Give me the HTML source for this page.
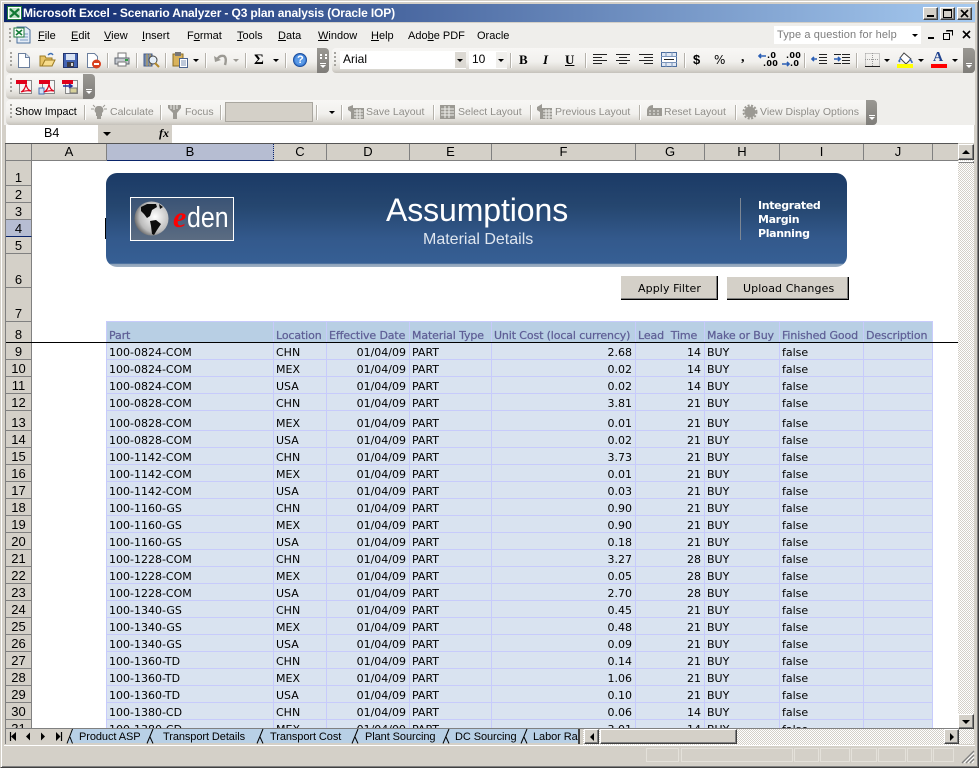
<!DOCTYPE html>
<html><head><meta charset="utf-8"><style>
*{box-sizing:border-box}
html,body{margin:0;padding:0;background:#d4d0c8}
#w{position:relative;width:979px;height:768px;overflow:hidden;background:#d4d0c8;font:11px "Liberation Sans",sans-serif;color:#000}
.a{position:absolute}
.t{position:absolute;white-space:nowrap;line-height:14px}
.g{color:#8f8d88}
.f{font-size:10.5px}
.tb{position:absolute;border-radius:4px;background:linear-gradient(#f8f7f5 0,#f1f0ed 55%,#dcd9d3 85%,#c4c1ba 100%)}
.gr{position:absolute;background:linear-gradient(#9a9893,#7f7d79);border-radius:0 4px 4px 0}
.s{position:absolute;height:15px;background:#b5b2ab;border-right:1px solid #fff;width:2px}
.dots{position:absolute;width:2px;background:repeating-linear-gradient(#a5a39e 0 2px,transparent 2px 4px)}
.ar{position:absolute;width:0;height:0;border-left:3px solid transparent;border-right:3px solid transparent;border-top:3px solid #000}
.ar.d{border-top-color:#9b9993}
svg{position:absolute;overflow:visible}
u{text-decoration:underline}
.ch{position:absolute;top:144px;height:17px;background:#d4d0c8;border-right:1px solid #808080;border-bottom:1px solid #808080;text-align:center;font:13px/16px "Liberation Sans",sans-serif}
#rh{position:absolute;left:5px;top:161px;width:27px;height:568px;overflow:hidden;background:#d4d0c8;border-left:1px solid #808080}
#rh div{border-bottom:1px solid #808080;border-right:1px solid #808080;text-align:center;font:13px/15px "Liberation Sans",sans-serif;display:flex;align-items:flex-end;justify-content:center;padding-bottom:0;height:17px}
#gd{position:absolute;left:32px;top:161px;width:926px;height:567px;overflow:hidden;background:#fff}
table{position:absolute;left:74px;top:160px;border-collapse:collapse;table-layout:fixed;width:826px;font:11px/13px "DejaVu Sans",sans-serif}
td{border:1px solid #c7cbfb;padding:0 2px;background:#d9e3f0;vertical-align:bottom;white-space:nowrap;overflow:hidden;height:17px;color:#000}
tr.h td{background:#b8cfe4;color:#5f5f96;height:21px;font-weight:500;-webkit-text-stroke:.25px #5f5f96;letter-spacing:-.12px}
.n{text-align:right;padding-right:3px}
.tab{position:absolute;top:730px;height:15px;font:11px/15px "Liberation Sans",sans-serif;white-space:nowrap;letter-spacing:-.08px}
.btn3{position:absolute;background:#d4d0c8;border-top:1px solid #fff;border-left:1px solid #fff;border-right:1px solid #404040;border-bottom:1px solid #404040;box-shadow:inset -1px -1px 0 #808080}
.sp{position:absolute;top:748px;height:14px;border:1px solid #e4e1da}
</style></head><body><div id="w">

<!-- window frame -->
<div class="a" style="left:0;top:0;width:979px;height:768px;border:1px solid #d4d0c8;border-right-color:#404040;border-bottom-color:#404040;box-shadow:inset 1px 1px 0 #fff,inset -1px -1px 0 #808080"></div>

<!-- title bar -->
<div class="a" style="left:4px;top:4px;width:971px;height:18px;background:linear-gradient(90deg,#0a246a,#a6caf0)"></div>
<svg style="left:7px;top:6px" width="15" height="14"><rect x=".5" y=".5" width="14" height="13" fill="#fff" stroke="#1f7a3d"/><rect x="2" y="2" width="11" height="10" fill="#bfe0c8"/><path d="M3 3l9 8M12 3l-9 8" stroke="#127a35" stroke-width="2.2"/></svg>
<div class="t" style="left:23px;top:6px;color:#fff;font:bold 12px/15px 'Liberation Sans',sans-serif;letter-spacing:-.135px">Microsoft Excel - Scenario Analyzer - Q3 plan analysis (Oracle IOP)</div>
<div class="btn3" style="left:923px;top:7px;width:15px;height:13px"></div><div class="a" style="left:927px;top:15px;width:7px;height:2px;background:#000"></div>
<div class="btn3" style="left:940px;top:7px;width:15px;height:13px"></div><div class="a" style="left:943px;top:9px;width:9px;height:9px;border:1px solid #000;border-top-width:2px"></div>
<div class="btn3" style="left:957px;top:7px;width:15px;height:13px"></div><svg style="left:957px;top:7px" width="15" height="13"><path d="M4 3l7 7M11 3l-7 7" stroke="#000" stroke-width="1.6"/></svg>

<!-- command bars background -->
<div class="a" style="left:4px;top:23px;width:971px;height:102px;background:#efeeeb"></div>

<!-- menu -->
<div class="dots" style="left:9px;top:28px;height:14px"></div>
<svg style="left:13px;top:26px" width="18" height="18"><path d="M4 1h9l4 3v13H4z" fill="#e4ecf6" stroke="#4a6f9c"/><path d="M7 8h8M7 11h8M7 14h8" stroke="#7b9cc4"/><rect x="1" y="2" width="10" height="9" fill="#fff" stroke="#1f7a3d"/><path d="M3 4l6 5M9 4l-6 5" stroke="#127a35" stroke-width="1.6"/></svg>
<div class="t" style="left:38px;top:29px"><u>F</u>ile</div>
<div class="t" style="left:71px;top:29px"><u>E</u>dit</div>
<div class="t" style="left:104px;top:29px"><u>V</u>iew</div>
<div class="t" style="left:142px;top:29px"><u>I</u>nsert</div>
<div class="t" style="left:187px;top:29px">F<u>o</u>rmat</div>
<div class="t" style="left:237px;top:29px"><u>T</u>ools</div>
<div class="t" style="left:278px;top:29px"><u>D</u>ata</div>
<div class="t" style="left:318px;top:29px"><u>W</u>indow</div>
<div class="t" style="left:371px;top:29px"><u>H</u>elp</div>
<div class="t" style="left:408px;top:29px">Ado<u>b</u>e PDF</div>
<div class="t" style="left:477px;top:29px">Oracle</div>
<div class="a" style="left:774px;top:26px;width:147px;height:18px;background:#fff"></div>
<div class="t" style="left:777px;top:28px;color:#7d7d7d;font-size:11px;letter-spacing:.1px">Type a question for help</div>
<div class="ar" style="left:912px;top:34px"></div>
<div class="a" style="left:928px;top:37px;width:6px;height:2px;background:#000"></div>
<svg style="left:943px;top:30px" width="10" height="10"><path d="M3.5 .5h6v5M.5 3.5h6v6h-6z" fill="none" stroke="#000"/><path d="M3 1h6M0 3.5h6" stroke="#000"/></svg>
<svg style="left:962px;top:30px" width="10" height="9"><path d="M1 1l7 7M8 1l-7 7" stroke="#000" stroke-width="1.6"/></svg>

<!-- toolbar 1 -->
<div class="tb" style="left:6px;top:48px;width:323px;height:25px"></div>
<div class="dots" style="left:10px;top:52px;height:16px"></div>
<svg style="left:18px;top:53px" width="12" height="15"><path d="M.5.5h7l4 4v10H.5z" fill="#fff" stroke="#6b7f9e"/><path d="M7.5.5v4h4" fill="#d7e3f2" stroke="#6b7f9e"/></svg>
<svg style="left:39px;top:51px" width="17" height="16"><path d="M1 5h5l1 2h6v8H1z" fill="#e8c466" stroke="#9b7a22"/><path d="M3 15l3-6h10l-3 6z" fill="#f7dc8c" stroke="#9b7a22"/><path d="M9 4q3-3 5 0" fill="none" stroke="#3d6fb5" stroke-width="1.4"/></svg>
<svg style="left:63px;top:53px" width="15" height="15"><rect x=".5" y=".5" width="14" height="14" fill="#4565b4" stroke="#23356e"/><rect x="3" y="1" width="9" height="6" fill="#d9e3f3"/><rect x="4" y="9" width="7" height="5" fill="#3c3c46"/><rect x="8" y="10" width="2" height="3" fill="#d9d9d9"/></svg>
<svg style="left:87px;top:53px" width="15" height="16"><path d="M.5.5h7l3 3v11H.5z" fill="#fff" stroke="#6b7f9e"/><circle cx="9.5" cy="11" r="4.5" fill="#d8401f"/><rect x="7" y="10" width="5" height="2" fill="#fff"/></svg>
<div class="s" style="left:107px;top:53px"></div>
<svg style="left:114px;top:52px" width="16" height="15"><path d="M4 1h8v5H4z" fill="#fff" stroke="#777"/><path d="M1 6h14v6H1z" fill="#c7cbd1" stroke="#5f6670"/><path d="M4 10h8v4H4z" fill="#fff" stroke="#777"/><rect x="11" y="7" width="3" height="2" fill="#2f9e44"/></svg>
<div class="s" style="left:136px;top:53px"></div>
<svg style="left:143px;top:52px" width="17" height="16"><path d="M1 2h8v12H1z" fill="#7189b3" stroke="#455b85"/><path d="M4 2v12M7 2v12" stroke="#c8a243"/><circle cx="10" cy="8" r="4" fill="#e4eef8" stroke="#444"/><path d="M12 11l4 4" stroke="#b58a2b" stroke-width="2"/></svg>
<div class="s" style="left:165px;top:53px"></div>
<svg style="left:172px;top:52px" width="17" height="16"><rect x="1" y="2" width="10" height="12" fill="#d9b35c" stroke="#8a6d24"/><rect x="3" y="0" width="6" height="4" fill="#777"/><path d="M7.5 6.5h8v9h-8z" fill="#fff" stroke="#4c658f"/><path d="M9 9h5M9 11h5M9 13h5" stroke="#7e93b4"/></svg>
<div class="ar" style="left:193px;top:59px"></div>
<div class="s" style="left:205px;top:53px"></div>
<svg style="left:214px;top:53px" width="14" height="13"><path d="M3 7q2-5 7-4 3 2 1 9" fill="none" stroke="#9c9a94" stroke-width="2.4"/><path d="M0 3l1 6 6-2z" fill="#9c9a94"/></svg>
<div class="ar d" style="left:233px;top:59px"></div>
<div class="s" style="left:245px;top:53px"></div>
<div class="t" style="left:254px;top:52px;font:bold 15px/16px 'Liberation Serif',serif">Σ</div>
<div class="ar" style="left:273px;top:59px"></div>
<div class="s" style="left:285px;top:53px"></div>
<svg style="left:293px;top:53px" width="14" height="14"><circle cx="7" cy="7" r="6.5" fill="#3e7fd6" stroke="#1e4f9c"/><circle cx="7" cy="7" r="5" fill="#5b9ae6"/></svg>
<div class="t" style="left:297px;top:53px;color:#fff;font:bold 11px/14px 'Liberation Sans',sans-serif">?</div>
<div class="gr" style="left:317px;top:48px;width:12px;height:25px"></div>
<div class="a" style="left:320px;top:54px;width:7px;height:3px;border-left:2px dotted #fff;border-right:2px dotted #fff"></div>
<div class="a" style="left:320px;top:63px;width:6px;height:1px;background:#fff"></div><div class="ar" style="left:320px;top:65px;border-top-color:#fff"></div>

<!-- font toolbar -->
<div class="tb" style="left:332px;top:48px;width:643px;height:25px"></div>
<div class="dots" style="left:334px;top:52px;height:16px"></div>
<div class="a" style="left:340px;top:51px;width:126px;height:18px;background:#fff"></div>
<div class="a" style="left:455px;top:52px;width:11px;height:16px;background:#dcd9d3"></div>
<div class="ar" style="left:457px;top:59px"></div>
<div class="t" style="left:343px;top:52px;font-size:12px">Arial</div>
<div class="a" style="left:469px;top:51px;width:38px;height:18px;background:#fff"></div>
<div class="a" style="left:496px;top:52px;width:11px;height:16px;background:#f0efec"></div>
<div class="ar" style="left:498px;top:59px"></div>
<div class="t" style="left:472px;top:52px;font-size:12px">10</div>
<div class="s" style="left:510px;top:53px"></div>
<div class="t" style="left:519px;top:52px;font:bold 13px/16px 'Liberation Serif',serif">B</div>
<div class="t" style="left:543px;top:52px;font:italic bold 13px/16px 'Liberation Serif',serif">I</div>
<div class="t" style="left:565px;top:52px;font:bold 13px/16px 'Liberation Serif',serif;text-decoration:underline">U</div>
<div class="s" style="left:585px;top:53px"></div>
<svg style="left:593px;top:53px" width="62" height="13"><path d="M0 1.5h14M0 4.5h9M0 7.5h14M0 10.5h9" stroke="#222"/><path d="M23 1.5h14M26 4.5h8M23 7.5h14M26 10.5h8" stroke="#222"/><path d="M46 1.5h14M51 4.5h9M46 7.5h14M51 10.5h9" stroke="#222"/></svg>
<svg style="left:661px;top:52px" width="16" height="15"><rect x=".5" y=".5" width="15" height="14" fill="#dfe7f3" stroke="#4c6e9e"/><path d="M0 4.5h16M0 10.5h16M5 0v4M11 0v4M5 11v4M11 11v4" stroke="#7a94ba"/><rect x="1" y="5" width="14" height="5" fill="#fff"/><path d="M3 7.5h10" stroke="#222"/></svg>
<div class="s" style="left:684px;top:53px"></div>
<div class="t" style="left:693px;top:52px;font:bold 13px/16px 'Liberation Sans',sans-serif">$</div>
<div class="t" style="left:714px;top:52px;font:12px/16px 'DejaVu Sans',sans-serif">%</div>
<div class="t" style="left:741px;top:50px;font:bold 14px/16px 'Liberation Serif',serif">,</div>
<div class="t" style="left:767px;top:52px;font:bold 8px/8px 'DejaVu Sans',sans-serif;letter-spacing:.3px">.0<br><span style="margin-left:-4px">.00</span></div>
<div class="t" style="left:786px;top:52px;font:bold 8px/8px 'DejaVu Sans',sans-serif;letter-spacing:.3px">.00<br><span style="margin-left:4px">.0</span></div>
<svg style="left:758px;top:53px" width="40" height="14"><path d="M8 3H1M3 1L1 3l2 2" fill="none" stroke="#2b5fb5" stroke-width="1.6"/><path d="M24 11h7M29 9l2 2-2 2" fill="none" stroke="#2b5fb5" stroke-width="1.6"/></svg>
<div class="s" style="left:804px;top:53px"></div>
<svg style="left:811px;top:53px" width="40" height="14"><path d="M8 1.5h8M8 4.5h8M8 7.5h8M8 10.5h8M31 1.5h8M31 4.5h8M31 7.5h8M31 10.5h8M23 1.5h7M23 10.5h7" stroke="#222"/><path d="M6 6H1M3 4L1 6l2 2M23 6h6M27 4l2 2-2 2" fill="none" stroke="#2b5fb5" stroke-width="1.6"/></svg>
<div class="s" style="left:856px;top:53px"></div>
<svg style="left:865px;top:53px" width="15" height="14"><path d="M.5.5h14v13M.5.5v13M7.5 0v13M0 6.5h14" fill="none" stroke="#999" stroke-dasharray="1 1"/><path d="M0 13.5h15" stroke="#222"/></svg>
<div class="ar" style="left:884px;top:59px"></div>
<svg style="left:897px;top:52px" width="17" height="16"><path d="M7 1l7 6-5 5-6-6z" fill="#fff" stroke="#444"/><path d="M4 6l-2 3 1 1" fill="none" stroke="#3c6cc0" stroke-width="1.5"/><path d="M12 8q3 0 3 3" stroke="#3c6cc0" fill="none" stroke-width="1.5"/><rect y="12" width="16" height="4" fill="#ffff00"/></svg>
<div class="ar" style="left:918px;top:59px"></div>
<div class="t" style="left:933px;top:50px;font:bold 14px/16px 'Liberation Serif',serif;color:#20438f">A</div>
<div class="a" style="left:931px;top:64px;width:16px;height:4px;background:#ff0000"></div>
<div class="ar" style="left:952px;top:59px"></div>
<div class="gr" style="left:963px;top:48px;width:12px;height:25px"></div>
<div class="a" style="left:966px;top:63px;width:6px;height:1px;background:#fff"></div><div class="ar" style="left:966px;top:65px;border-top-color:#fff"></div>

<!-- toolbar 2 -->
<div class="tb" style="left:6px;top:74px;width:89px;height:25px"></div>
<div class="dots" style="left:10px;top:78px;height:16px"></div>
<svg style="left:16px;top:79px" width="64" height="16"><g><path d="M3.5 1.5h12v13h-12z" fill="#f5f5f5" stroke="#888"/><rect y="1" width="11" height="4" fill="#e0001a"/><path d="M5 13q4-2 5-8 1 6 5 7-5-1-10 1z" fill="none" stroke="#e0001a" stroke-width="1.2"/></g><g transform="translate(23)"><path d="M3.5 1.5h12v13h-12z" fill="#f5f5f5" stroke="#888"/><rect y="1" width="11" height="4" fill="#e0001a"/><rect x="0" y="9" width="5" height="6" fill="#cfe0f5" stroke="#4a6fb0"/><path d="M5 13q4-2 5-8 1 6 5 7-5-1-10 1z" fill="none" stroke="#e0001a" stroke-width="1.2"/></g><g transform="translate(46)"><path d="M3.5 1.5h12v13h-12z" fill="#f5f5f5" stroke="#888"/><rect y="1" width="11" height="4" fill="#e0001a"/><path d="M1 7h8M7 5l3 2-3 2" fill="none" stroke="#1f2f9c" stroke-width="1.5"/><rect x="8" y="9" width="7" height="5" fill="#d7d19a" stroke="#777"/></g></svg>
<div class="gr" style="left:83px;top:74px;width:12px;height:25px"></div>
<div class="a" style="left:86px;top:89px;width:6px;height:1px;background:#fff"></div><div class="ar" style="left:86px;top:91px;border-top-color:#fff"></div>

<!-- toolbar 3 -->
<div class="tb" style="left:6px;top:100px;width:871px;height:25px"></div>
<div class="dots" style="left:10px;top:104px;height:16px"></div>
<div class="t" style="left:15px;top:105px;font-size:10.7px">Show Impact</div>
<div class="s" style="left:84px;top:105px"></div>
<svg style="left:91px;top:104px" width="16" height="16"><path d="M8 2a4 4 0 0 1 3 7v3H5V9a4 4 0 0 1 3-7z" fill="#9b9993"/><rect x="6" y="12" width="4" height="3" fill="#9b9993"/><path d="M0 5h3M13 5h3M2 1l2 2M14 1l-2 2" stroke="#9b9993"/></svg>
<div class="t g f" style="left:110px;top:105px">Calculate</div>
<div class="s" style="left:160px;top:105px"></div>
<svg style="left:168px;top:104px" width="14" height="15"><path d="M0 1h13v3L9 9v6H5V9L0 4z" fill="#9b9993"/><path d="M3 1v4M6 1v5M9 1v4" stroke="#efeeeb"/></svg>
<div class="t g f" style="left:185px;top:105px">Focus</div>
<div class="s" style="left:220px;top:105px"></div>
<div class="a" style="left:225px;top:102px;width:88px;height:20px;background:#d4d0c8;border:1px solid #a9a69f"></div>
<div class="s" style="left:316px;top:105px"></div>
<div class="ar" style="left:329px;top:111px"></div>
<div class="s" style="left:341px;top:105px"></div>
<svg style="left:348px;top:104px" width="16" height="16"><path d="M0 3l5-2v3h11v11H3V8L0 6z" fill="#9b9993"/><path d="M6 7h9M6 10h9M6 13h9M9 5v10M12 5v10" stroke="#efeeeb"/></svg>
<div class="t g f" style="left:366px;top:105px">Save Layout</div>
<div class="s" style="left:433px;top:105px"></div>
<svg style="left:440px;top:104px" width="16" height="16"><rect y="1" width="15" height="14" fill="#9b9993"/><path d="M1 5h13M1 8h13M1 11h13M5 2v12M9 2v12" stroke="#efeeeb"/></svg>
<div class="t g f" style="left:458px;top:105px">Select Layout</div>
<div class="s" style="left:530px;top:105px"></div>
<svg style="left:537px;top:104px" width="16" height="16"><path d="M0 3l5-3v4h10v11H3V8L0 6z" fill="#9b9993"/><path d="M6 7h9M6 10h9M6 13h9M9 5v10M12 5v10" stroke="#efeeeb"/></svg>
<div class="t g f" style="left:555px;top:105px">Previous Layout</div>
<div class="s" style="left:639px;top:105px"></div>
<svg style="left:646px;top:104px" width="16" height="16"><path d="M1 6q1-5 6-5v3h9v8H1z" fill="#9b9993"/><path d="M3 7h2M7 7h2M11 7h2M3 10h2M7 10h2M11 10h2" stroke="#efeeeb"/></svg>
<div class="t g f" style="left:664px;top:105px">Reset Layout</div>
<div class="s" style="left:735px;top:105px"></div>
<svg style="left:743px;top:105px" width="14" height="14"><circle cx="7" cy="7" r="5.5" fill="#9b9993"/><circle cx="7" cy="7" r="6.5" fill="none" stroke="#9b9993" stroke-width="2" stroke-dasharray="2 1.5"/></svg>
<div class="t g f" style="left:760px;top:105px">View Display Options</div>
<div class="gr" style="left:866px;top:100px;width:11px;height:25px"></div>
<div class="a" style="left:869px;top:115px;width:6px;height:1px;background:#fff"></div><div class="ar" style="left:869px;top:117px;border-top-color:#fff"></div>

<!-- name box / formula bar -->
<div class="a" style="left:6px;top:125px;width:92px;height:18px;background:#fff"></div>
<div class="t" style="left:44px;top:126px;font-size:12.5px">B4</div>
<div class="ar" style="left:103px;top:132px;border-left-width:4px;border-right-width:4px;border-top-width:4px"></div>
<div class="t" style="left:159px;top:126px;font:italic bold 12px/14px 'Liberation Serif',serif">fx</div>
<div class="a" style="left:172px;top:125px;width:802px;height:18px;background:#fff"></div>

<!-- column headers -->
<div class="a" style="left:5px;top:143px;width:953px;height:1px;background:#555"></div>
<div class="ch" style="left:5px;width:27px;border-left:1px solid #808080"></div>
<div class="ch" style="left:32px;width:75px">A</div>
<div class="ch" style="left:107px;width:167px;background:#b6bdd2;border-bottom:1px solid #0a246a;border-right:1px dotted #0a246a">B</div>
<div class="ch" style="left:274px;width:53px">C</div>
<div class="ch" style="left:327px;width:83px">D</div>
<div class="ch" style="left:410px;width:82px">E</div>
<div class="ch" style="left:492px;width:144px">F</div>
<div class="ch" style="left:636px;width:69px">G</div>
<div class="ch" style="left:705px;width:75px">H</div>
<div class="ch" style="left:780px;width:84px">I</div>
<div class="ch" style="left:864px;width:69px">J</div>
<div class="ch" style="left:933px;width:25px;border-right:0"></div>

<!-- row headers -->
<div id="rh">
<div style="height:25px">1</div><div>2</div><div>3</div><div style="background:#b6bdd2;border-bottom:1px solid #0a246a">4</div><div>5</div>
<div style="height:34px">6</div><div style="height:34px">7</div><div style="height:21px">8</div>
<div>9</div><div>10</div><div>11</div><div>12</div><div style="height:20px">13</div><div>14</div><div>15</div><div>16</div><div>17</div><div>18</div><div>19</div><div>20</div><div>21</div><div>22</div><div>23</div><div>24</div><div>25</div><div>26</div><div>27</div><div>28</div><div>29</div><div>30</div><div>31</div>
</div>

<!-- grid -->
<div id="gd">
<table>
<colgroup><col style="width:167px"><col style="width:53px"><col style="width:83px"><col style="width:82px"><col style="width:144px"><col style="width:69px"><col style="width:75px"><col style="width:84px"><col style="width:69px"></colgroup>
<tr class="h"><td>Part</td><td>Location</td><td>Effective Date</td><td>Material Type</td><td>Unit Cost (local currency)</td><td>Lead&nbsp; Time</td><td>Make or Buy</td><td>Finished Good</td><td>Description</td></tr>
<tr><td>100-0824-COM</td><td>CHN</td><td class="n">01/04/09</td><td>PART</td><td class="n">2.68</td><td class="n">14</td><td>BUY</td><td>false</td><td></td></tr>
<tr><td>100-0824-COM</td><td>MEX</td><td class="n">01/04/09</td><td>PART</td><td class="n">0.02</td><td class="n">14</td><td>BUY</td><td>false</td><td></td></tr>
<tr><td>100-0824-COM</td><td>USA</td><td class="n">01/04/09</td><td>PART</td><td class="n">0.02</td><td class="n">14</td><td>BUY</td><td>false</td><td></td></tr>
<tr><td>100-0828-COM</td><td>CHN</td><td class="n">01/04/09</td><td>PART</td><td class="n">3.81</td><td class="n">21</td><td>BUY</td><td>false</td><td></td></tr>
<tr style="height:20px"><td style="height:20px">100-0828-COM</td><td style="height:20px">MEX</td><td class="n" style="height:20px">01/04/09</td><td style="height:20px">PART</td><td class="n" style="height:20px">0.01</td><td class="n" style="height:20px">21</td><td style="height:20px">BUY</td><td style="height:20px">false</td><td style="height:20px"></td></tr>
<tr><td>100-0828-COM</td><td>USA</td><td class="n">01/04/09</td><td>PART</td><td class="n">0.02</td><td class="n">21</td><td>BUY</td><td>false</td><td></td></tr>
<tr><td>100-1142-COM</td><td>CHN</td><td class="n">01/04/09</td><td>PART</td><td class="n">3.73</td><td class="n">21</td><td>BUY</td><td>false</td><td></td></tr>
<tr><td>100-1142-COM</td><td>MEX</td><td class="n">01/04/09</td><td>PART</td><td class="n">0.01</td><td class="n">21</td><td>BUY</td><td>false</td><td></td></tr>
<tr><td>100-1142-COM</td><td>USA</td><td class="n">01/04/09</td><td>PART</td><td class="n">0.03</td><td class="n">21</td><td>BUY</td><td>false</td><td></td></tr>
<tr><td>100-1160-GS</td><td>CHN</td><td class="n">01/04/09</td><td>PART</td><td class="n">0.90</td><td class="n">21</td><td>BUY</td><td>false</td><td></td></tr>
<tr><td>100-1160-GS</td><td>MEX</td><td class="n">01/04/09</td><td>PART</td><td class="n">0.90</td><td class="n">21</td><td>BUY</td><td>false</td><td></td></tr>
<tr><td>100-1160-GS</td><td>USA</td><td class="n">01/04/09</td><td>PART</td><td class="n">0.18</td><td class="n">21</td><td>BUY</td><td>false</td><td></td></tr>
<tr><td>100-1228-COM</td><td>CHN</td><td class="n">01/04/09</td><td>PART</td><td class="n">3.27</td><td class="n">28</td><td>BUY</td><td>false</td><td></td></tr>
<tr><td>100-1228-COM</td><td>MEX</td><td class="n">01/04/09</td><td>PART</td><td class="n">0.05</td><td class="n">28</td><td>BUY</td><td>false</td><td></td></tr>
<tr><td>100-1228-COM</td><td>USA</td><td class="n">01/04/09</td><td>PART</td><td class="n">2.70</td><td class="n">28</td><td>BUY</td><td>false</td><td></td></tr>
<tr><td>100-1340-GS</td><td>CHN</td><td class="n">01/04/09</td><td>PART</td><td class="n">0.45</td><td class="n">21</td><td>BUY</td><td>false</td><td></td></tr>
<tr><td>100-1340-GS</td><td>MEX</td><td class="n">01/04/09</td><td>PART</td><td class="n">0.48</td><td class="n">21</td><td>BUY</td><td>false</td><td></td></tr>
<tr><td>100-1340-GS</td><td>USA</td><td class="n">01/04/09</td><td>PART</td><td class="n">0.09</td><td class="n">21</td><td>BUY</td><td>false</td><td></td></tr>
<tr><td>100-1360-TD</td><td>CHN</td><td class="n">01/04/09</td><td>PART</td><td class="n">0.14</td><td class="n">21</td><td>BUY</td><td>false</td><td></td></tr>
<tr><td>100-1360-TD</td><td>MEX</td><td class="n">01/04/09</td><td>PART</td><td class="n">1.06</td><td class="n">21</td><td>BUY</td><td>false</td><td></td></tr>
<tr><td>100-1360-TD</td><td>USA</td><td class="n">01/04/09</td><td>PART</td><td class="n">0.10</td><td class="n">21</td><td>BUY</td><td>false</td><td></td></tr>
<tr><td>100-1380-CD</td><td>CHN</td><td class="n">01/04/09</td><td>PART</td><td class="n">0.06</td><td class="n">14</td><td>BUY</td><td>false</td><td></td></tr>
<tr><td>100-1380-CD</td><td>MEX</td><td class="n">01/04/09</td><td>PART</td><td class="n">3.01</td><td class="n">14</td><td>BUY</td><td>false</td><td></td></tr>
</table>
</div>
<!-- freeze line -->
<div class="a" style="left:6px;top:342px;width:952px;height:1px;background:#000"></div>

<!-- banner -->
<div class="a" style="left:105px;top:218px;width:1px;height:21px;background:#000"></div>
<div class="a" style="left:106px;top:173px;width:741px;height:94px;border-radius:11px;background:linear-gradient(#1b3a66 0,#25466f 35%,#33598c 70%,#365f94 96%,#8ea3bb 97%,#9fb0c4 100%)"></div>
<div class="a" style="left:130px;top:197px;width:104px;height:44px;border:1px solid #fff;background:linear-gradient(#3a5375,#5b6c82)"></div>
<svg style="left:134px;top:201px" width="36" height="36"><defs><radialGradient id="gl" cx=".6" cy=".45" r=".65"><stop offset="0" stop-color="#fff"/><stop offset=".7" stop-color="#bbb"/><stop offset="1" stop-color="#555"/></radialGradient></defs><circle cx="17.5" cy="17.5" r="17" fill="url(#gl)"/><path d="M7 6l6-3 9 0 1 3-5 3-2 6-3 2-3-4-3-3z" fill="#0c0c0c"/><path d="M16 20l6-1 5 4-4 6-3 5-2-1-1-8z" fill="#0c0c0c"/><path d="M25 3l4 3-3 2z" fill="#111"/></svg>
<div class="t" style="left:173px;top:203px;font:italic bold 30px/30px 'Liberation Serif',serif;color:#f00">e</div>
<div class="t" style="left:187px;top:202px;font:29px/32px 'Liberation Sans',sans-serif;color:#fff;transform:scaleX(.86);transform-origin:left">den</div>
<div class="t" style="left:386px;top:191px;font:32px/38px 'Liberation Sans',sans-serif;color:#fff;letter-spacing:-.1px">Assumptions</div>
<div class="t" style="left:423px;top:230px;font:16px/19px 'Liberation Sans',sans-serif;color:#dfe6ef">Material Details</div>
<div class="a" style="left:740px;top:198px;width:1px;height:42px;background:#7d8794"></div>
<div class="t" style="left:758px;top:199px;font:bold 11px/14px 'DejaVu Sans',sans-serif;color:#fff;letter-spacing:-.35px">Integrated</div>
<div class="t" style="left:758px;top:213px;font:bold 11px/14px 'DejaVu Sans',sans-serif;color:#fff;letter-spacing:-.35px">Margin</div>
<div class="t" style="left:758px;top:227px;font:bold 11px/14px 'DejaVu Sans',sans-serif;color:#fff;letter-spacing:-.35px">Planning</div>

<!-- buttons -->
<div class="a" style="left:621px;top:276px;width:97px;height:24px;background:#d4d0c8;border-right:1px solid #000;border-bottom:1px solid #000;box-shadow:inset -1px -1px 0 #808080"></div>
<div class="t" style="left:638px;top:282px;font:11px/14px 'DejaVu Sans',sans-serif;letter-spacing:.1px">Apply Filter</div>
<div class="a" style="left:727px;top:277px;width:122px;height:23px;background:#d4d0c8;border-right:1px solid #000;border-bottom:1px solid #000;box-shadow:inset -1px -1px 0 #808080"></div>
<div class="t" style="left:743px;top:282px;font:11px/14px 'DejaVu Sans',sans-serif;letter-spacing:.1px">Upload Changes</div>

<!-- vertical scrollbar -->
<div class="a" style="left:958px;top:144px;width:16px;height:600px;background:conic-gradient(#fff 25%,#d4d0c8 0 50%,#fff 0 75%,#d4d0c8 0) 0 0/2px 2px"></div>
<div class="btn3" style="left:958px;top:144px;width:16px;height:16px"></div><div class="ar" style="left:962px;top:150px;border-top:0;border-bottom:4px solid #000;border-left-width:4px;border-right-width:4px"></div>
<div class="btn3" style="left:958px;top:161px;width:16px;height:1px;border-bottom:1px solid #808080"></div>
<div class="btn3" style="left:958px;top:714px;width:16px;height:15px"></div><div class="ar" style="left:962px;top:720px;border-top-width:4px;border-left-width:4px;border-right-width:4px"></div>

<!-- sheet tabs -->
<div class="a" style="left:5px;top:728px;width:953px;height:17px;background:#d4d0c8;border-top:1px solid #808080"></div>
<div class="a" style="left:5px;top:729px;width:1px;height:15px;background:#808080"></div>
<svg style="left:0;top:731px" width="70" height="11"><path d="M10.500 1v9" stroke="#000" stroke-width="1.2"/><path d="M16 1l-5 4.500 5 4.500zM30 1.500l-4 4 4 4zM41 1.500l4 4-4 4zM56 1l4.500 4.500-4.500 4.500z" fill="#000"/><path d="M61.500 1v9" stroke="#000" stroke-width="1.200"/></svg>
<svg style="left:0;top:729px" width="585" height="15"><polygon points="72,0 578,0 578,14 67,14" fill="#b8d0e6"/><path d="M67 14.500L72.500 0M70 8l2.500 6.500M147 14.500L153 0M150 8l3 6.500M257 14.500L263 0M260 8l3 6.500M352 14.500L358 0M355 8l3 6.500M443 14.500L449 0M446 8l3 6.500M521 14.500L527 0M524 8l3 6.500" stroke="#000" fill="none"/></svg>
<div class="tab" style="left:79px">Product ASP</div>
<div class="tab" style="left:163px">Transport Details</div>
<div class="tab" style="left:270px">Transport Cost</div>
<div class="tab" style="left:365px">Plant Sourcing</div>
<div class="tab" style="left:455px">DC Sourcing</div>
<div class="tab" style="left:533px;width:45px;overflow:hidden">Labor Ra</div>
<div class="a" style="left:578px;top:729px;width:2px;height:15px;background:#404040"></div>

<!-- horizontal scrollbar -->
<div class="a" style="left:583px;top:729px;width:375px;height:16px;background:conic-gradient(#fff 25%,#d4d0c8 0 50%,#fff 0 75%,#d4d0c8 0) 0 0/2px 2px"></div>
<div class="btn3" style="left:584px;top:729px;width:15px;height:15px"></div><div class="ar" style="left:590px;top:733px;border:0;border-top:4px solid transparent;border-bottom:4px solid transparent;border-right:4px solid #000"></div>
<div class="btn3" style="left:600px;top:729px;width:137px;height:15px"></div>
<div class="btn3" style="left:944px;top:729px;width:15px;height:15px"></div><div class="ar" style="left:950px;top:733px;border:0;border-top:4px solid transparent;border-bottom:4px solid transparent;border-left:4px solid #000"></div>

<!-- status bar -->
<div class="a" style="left:4px;top:745px;width:971px;height:1px;background:#fff"></div>
<div class="sp" style="left:646px;width:33px"></div>
<div class="sp" style="left:681px;width:112px"></div>
<div class="sp" style="left:794px;width:25px"></div>
<div class="sp" style="left:820px;width:30px"></div>
<div class="sp" style="left:851px;width:26px"></div>
<div class="sp" style="left:878px;width:28px"></div>
<div class="sp" style="left:907px;width:25px"></div>
<div class="sp" style="left:933px;width:21px"></div>
<svg style="left:962px;top:751px" width="12" height="12"><path d="M12 0L0 12M12 4L4 12M12 8l-4 4" stroke="#808080" stroke-width="1.3"/><path d="M12 2L2 12M12 6l-6 6M12 10l-2 2" stroke="#fff"/></svg>

</div></body></html>
